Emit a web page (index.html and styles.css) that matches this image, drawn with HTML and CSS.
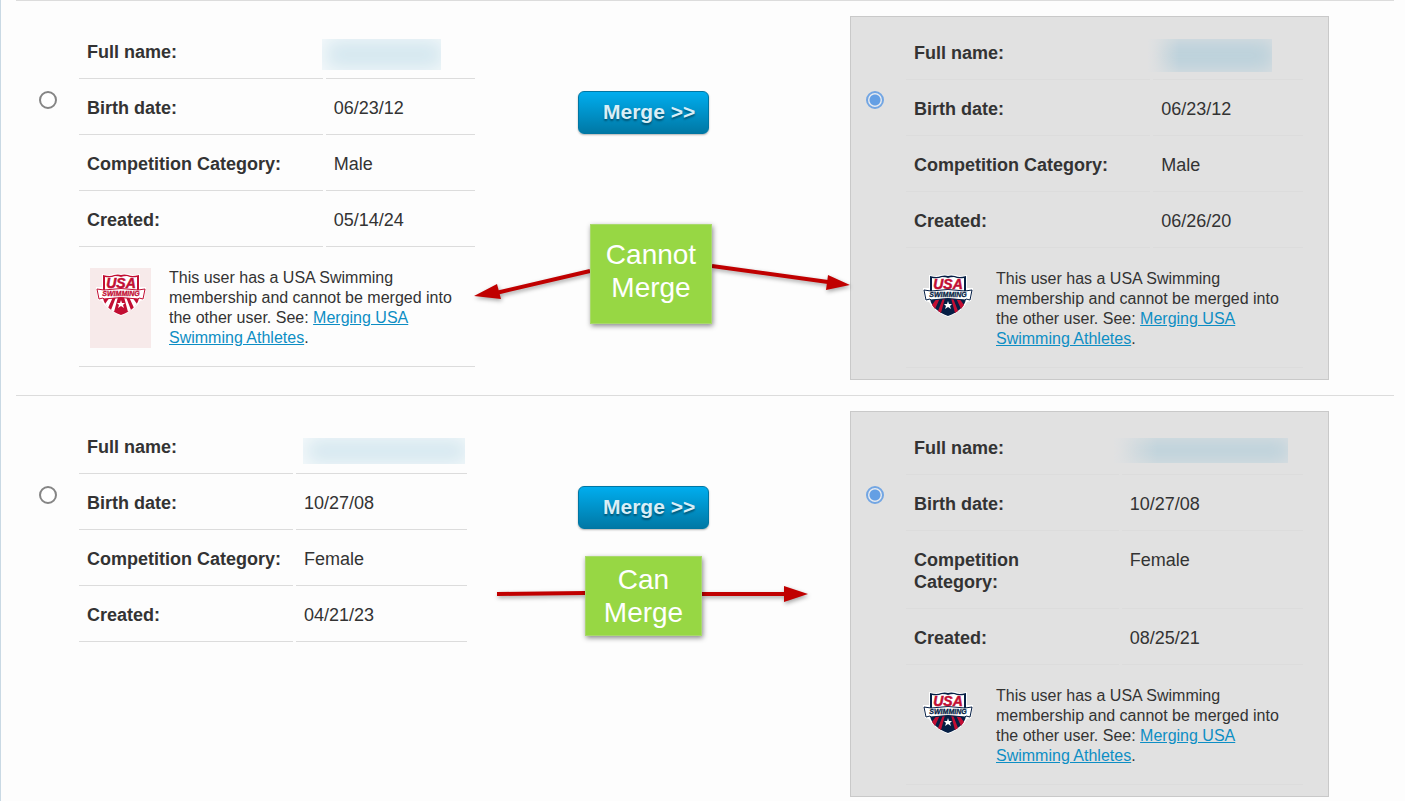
FILE: index.html
```html
<!DOCTYPE html>
<html lang="en">
<head>
  <meta charset="UTF-8" />
  <meta name="viewport" content="width=device-width, initial-scale=1" />
  <title>Merge users</title>
  <link rel="stylesheet" href="styles.css">
</head>
<body>
  <svg class="defs" width="0" height="0" aria-hidden="true">
    <defs>
      <symbol id="usa-logo" viewBox="0 0 50 43">
        <path class="logo-halo" d="M6 1Q13 3 17 1Q21 0 25 1Q29 0 33 1Q37 3 44 1V14L50 14L48 27L44 28Q40 37 25 43Q10 37 6 28L2 27L0 14L6 14Z"/>
        <path class="logo-shield" d="M7 2Q14 4 18 2Q22 1 25 2Q28 1 32 2Q36 4 43 2V25Q41 36 25 42Q9 36 7 25Z"/>
        <path class="logo-face" d="M9 4Q15 5 19 3Q23 3 25 4Q27 3 31 3Q35 5 41 4V17H9Z"/>
        <path class="logo-stripe" d="M20 24L15 37L18 39L22 24ZM28 24L32 39L35 37L30 24ZM14 24L9 31L12 35L17 24ZM33 24L38 35L41 31L36 24Z"/>
        <path class="logo-star" d="M25 27L26 30H29L27 32L28 35L25 33L22 35L23 32L21 30H24Z"/>
        <path class="logo-ribbon" d="M1 16L8 17Q25 14 42 17L49 16L47 26L43 25L42 26Q25 23 8 26L7 25L3 26Z"/>
        <text class="logo-usa" x="25" y="15" text-anchor="middle">USA</text>
        <text class="logo-swim" x="25" y="23" text-anchor="middle">SWIMMING</text>
      </symbol>
    </defs>
  </svg>

  <form class="merge-list">
    <section class="pair">
      <div class="user">
        <input type="radio" name="pair1" id="p1-left" aria-label="Keep left user">
        <table class="details">
          <colgroup><col class="col-label"><col></colgroup>
          <tr><th scope="row">Full name:</th><td><span class="hidden-name name-a"></span></td></tr>
          <tr><th scope="row">Birth date:</th><td>06/23/12</td></tr>
          <tr><th scope="row">Competition Category:</th><td>Male</td></tr>
          <tr><th scope="row">Created:</th><td>05/14/24</td></tr>
          <tr>
            <td colspan="2" class="notice-cell">
              <div class="notice">
                <div class="logo-box flagged"><svg class="logo"><use href="#usa-logo"/></svg></div>
                <p>This user has a USA Swimming membership and cannot be merged into the other user. See: <a href="#">Merging USA Swimming Athletes</a>.</p>
              </div>
            </td>
          </tr>
        </table>
      </div>
      <div class="action">
        <button type="button" class="merge-btn">Merge &gt;&gt;</button>
        <svg class="arrows" aria-hidden="true">
          <path class="line" d="M88 255L-6 277M210 250L326 266"/>
          <path class="head" d="M-28 280L-5 268L-1 283ZM348 269L326 259L324 274Z"/>
        </svg>
        <div class="callout cannot">Cannot Merge</div>
      </div>
      <div class="user selected">
        <input type="radio" name="pair1" id="p1-right" aria-label="Keep right user" checked>
        <table class="details">
          <colgroup><col class="col-label"><col></colgroup>
          <tr><th scope="row">Full name:</th><td><span class="hidden-name name-b"></span></td></tr>
          <tr><th scope="row">Birth date:</th><td>06/23/12</td></tr>
          <tr><th scope="row">Competition Category:</th><td>Male</td></tr>
          <tr><th scope="row">Created:</th><td>06/26/20</td></tr>
          <tr>
            <td colspan="2" class="notice-cell">
              <div class="notice">
                <div class="logo-box"><svg class="logo"><use href="#usa-logo"/></svg></div>
                <p>This user has a USA Swimming membership and cannot be merged into the other user. See: <a href="#">Merging USA Swimming Athletes</a>.</p>
              </div>
            </td>
          </tr>
        </table>
      </div>
    </section>

    <section class="pair">
      <div class="user">
        <input type="radio" name="pair2" id="p2-left" aria-label="Keep left user">
        <table class="details compact">
          <colgroup><col class="col-label"><col></colgroup>
          <tr><th scope="row">Full name:</th><td><span class="hidden-name name-c"></span></td></tr>
          <tr><th scope="row">Birth date:</th><td>10/27/08</td></tr>
          <tr><th scope="row">Competition Category:</th><td>Female</td></tr>
          <tr><th scope="row">Created:</th><td>04/21/23</td></tr>
        </table>
      </div>
      <div class="action">
        <button type="button" class="merge-btn">Merge &gt;&gt;</button>
        <svg class="arrows" aria-hidden="true">
          <path class="line" d="M-5 183L83 182M200 183H284"/>
          <path class="head" d="M306 183L282 175V191Z"/>
        </svg>
        <div class="callout can">Can<br>Merge</div>
      </div>
      <div class="user selected">
        <input type="radio" name="pair2" id="p2-right" aria-label="Keep right user" checked>
        <table class="details narrow">
          <colgroup><col class="col-label"><col></colgroup>
          <tr><th scope="row">Full name:</th><td><span class="hidden-name name-d"></span></td></tr>
          <tr><th scope="row">Birth date:</th><td>10/27/08</td></tr>
          <tr><th scope="row">Competition Category:</th><td>Female</td></tr>
          <tr><th scope="row">Created:</th><td>08/25/21</td></tr>
          <tr>
            <td colspan="2" class="notice-cell">
              <div class="notice">
                <div class="logo-box"><svg class="logo"><use href="#usa-logo"/></svg></div>
                <p>This user has a USA Swimming membership and cannot be merged into the other user. See: <a href="#">Merging USA Swimming Athletes</a>.</p>
              </div>
            </td>
          </tr>
        </table>
      </div>
    </section>
  </form>
</body>
</html>
```

FILE: styles.css
```css
* {
  box-sizing: border-box;
}
body {
  margin: 0;
  min-height: 100vh;
  padding: 0 11px 0 15px;
  border-left: 1px solid #c9d9e4;
  background: #fdfdfd;
  color: #333;
  font-family: "Liberation Sans", Arial, sans-serif;
  font-size: 18px;
  line-height: 22px;
}
.defs {
  position: absolute;
}
.pair {
  display: grid;
  grid-template-columns: 1fr 348px 1fr;
  align-items: start;
  padding: 15px 65px 15px 7px;
  border-top: 1px solid #dcdcdc;
}
.pair:last-child {
  padding-bottom: 0;
}
.user {
  display: flex;
  align-items: flex-start;
  gap: 22px;
  padding: 7px 27px 11px 16px;
}
.user.selected {
  padding: 7px 25px 11px 15px;
  background: #e1e1e1;
  border: 1px solid #c9c9c9;
}

/* radio */
.user input {
  appearance: none;
  flex: none;
  width: 18px;
  height: 18px;
  margin: 68px 0 0;
  border: 2px solid #858585;
  border-radius: 50%;
  background: #fff;
}
.user.selected input {
  margin-top: 67px;
  border-color: #73a6e3;
  background: radial-gradient(circle, #649fe4 5px, #e6eaf0 6px);
}

/* user details */
.details {
  flex: 1;
  table-layout: fixed;
  width: 100%;
  margin: 0 -3px;
  border-spacing: 3px 0;
}
.details.compact {
  margin-right: 5px;
}
.col-label {
  width: 62%;
}
.compact .col-label {
  width: 214px;
}
.narrow .col-label {
  width: 54%;
}
th, td {
  position: relative;
  padding: 18px 8px 15px;
  border-bottom: 1px solid #dcdcdc;
  text-align: left;
  vertical-align: top;
}
th {
  padding-right: 0;
}
.narrow th {
  padding-right: 16px;
}
.details .notice-cell {
  padding: 21px 8px 18px 11px;
}
.notice {
  display: flex;
  gap: 18px;
  font-size: 16px;
  line-height: 20px;
}
.notice p {
  flex: 1;
  margin: 0;
}
.notice a {
  color: #0d8ec4;
}

/* blurred names */
.hidden-name {
  position: absolute;
  background: #d4e7ef;
  box-shadow: inset 3px 0 20px #f8fbfc;
}
.selected .hidden-name {
  background: linear-gradient(90deg, #e1e1e1, #bbd1db 25%);
  box-shadow: inset 3px 0 20px #e0e1e2;
}
.name-a { left: -4px; top: 16px; width: 119px; height: 31px; }
.name-b { left: -5px; top: 15px; width: 124px; height: 33px; }
.name-c { left: 7px; top: 20px; width: 162px; height: 26px; }
.name-d { left: -8px; top: 19px; width: 174px; height: 25px; }

/* logo */
.logo-box {
  --main: #061f45;
  --accent: #c20e33;
  --stripe: #c20e33;
  flex: none;
  width: 61px;
  height: 80px;
  padding: 5px 6px;
}
.logo-box.flagged {
  --main: #c20e33;
  --stripe: #fff;
  background: #f7eaea;
}
.logo {
  display: block;
  width: 50px;
  height: 43px;
}
.logo-halo, .logo-face, .logo-star { fill: #fff; }
.logo-shield { fill: var(--main); }
.logo-stripe { fill: var(--stripe); }
.logo-ribbon { fill: #fff; stroke: var(--main); stroke-width: 1; }
.logo-usa {
  fill: var(--accent);
  stroke: var(--accent);
  stroke-width: 0.5;
  font: italic bold 14px "Liberation Sans", Arial, sans-serif;
}
.logo-swim {
  fill: var(--main);
  stroke: var(--main);
  stroke-width: 0.3;
  font: italic bold 7px "Liberation Sans", Arial, sans-serif;
}

/* merge button and callouts */
.action {
  position: relative;
  align-self: stretch;
  padding: 75px 0 0 76px;
}
.merge-btn {
  display: block;
  padding: 9px 13px 10px 24px;
  border: 1px solid #0076a3;
  border-radius: 6px;
  background: linear-gradient(#00adee, #0078a5);
  box-shadow: 0 1px 2px rgba(0,0,0,0.3);
  color: #d9eef7;
  font: bold 21px/22px "Liberation Sans", Arial, sans-serif;
  text-shadow: 0 2px 2px rgba(0,0,0,0.4);
  cursor: pointer;
}
.arrows {
  position: absolute;
  top: 0;
  left: 0;
  width: 100%;
  height: 100%;
  overflow: visible;
  pointer-events: none;
  filter: drop-shadow(1px 2px 2px rgba(0,0,0,0.35));
}
.line { stroke: #c00000; stroke-width: 4; }
.head { fill: #c00000; }
.callout {
  position: absolute;
  background: #97d744;
  border: 1px solid #a9d96c;
  box-shadow: 1px 2px 5px rgba(0,0,0,0.45);
  color: #fff;
  font-size: 28px;
  line-height: 33px;
  text-align: center;
}
.cannot {
  top: 208px;
  left: 88px;
  width: 122px;
  height: 100px;
  padding: 13px 10px;
}
.can {
  top: 145px;
  left: 83px;
  width: 117px;
  height: 80px;
  padding: 6px 10px;
}
```
